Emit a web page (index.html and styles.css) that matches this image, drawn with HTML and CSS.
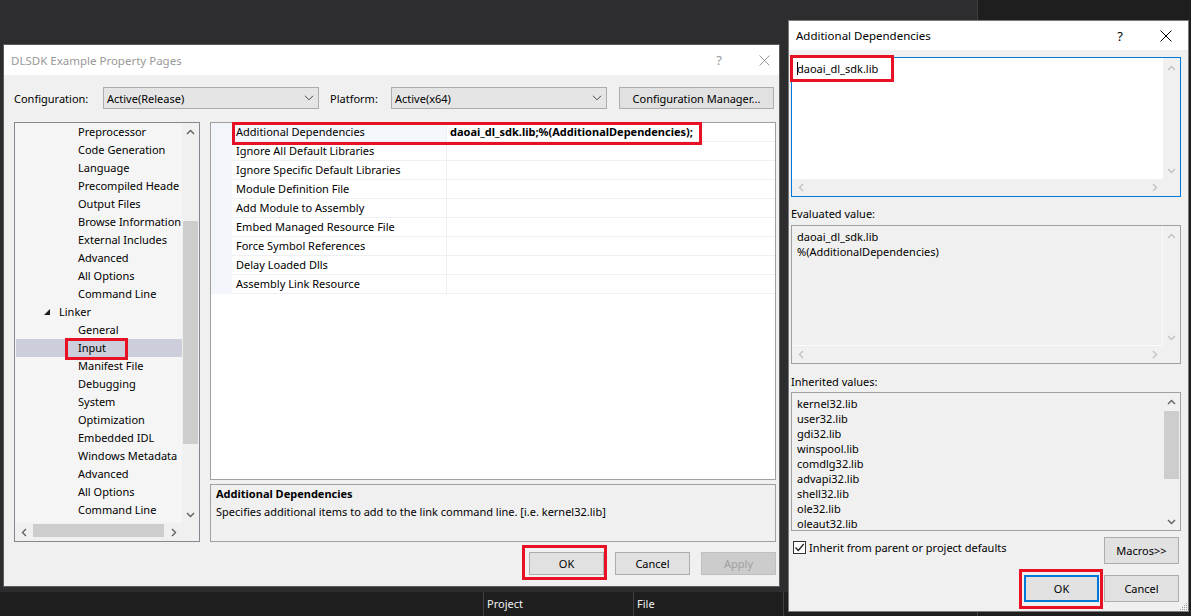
FILE: index.html
```html
<!DOCTYPE html>
<html lang="en">
<head>
  <meta charset="UTF-8">
  <meta name="viewport" content="width=device-width, initial-scale=1.0">
  <title>DLSDK Example Property Pages</title>
  <link rel="stylesheet" href="styles.css">
</head>
<body>
  <div class="ide-side"></div>

  <div class="output-bar">
    <div class="output-head">
      <div class="ocol first"></div>
      <div class="ocol">Project</div>
      <div class="ocol">File</div>
    </div>
  </div>

  <!-- property pages dialog -->
  <div class="window props">
    <div class="titlebar">
      <span class="title">DLSDK Example Property Pages</span>
      <span class="cap-btn help">?</span>
      <span class="cap-btn close">
        <svg width="11" height="11" viewBox="0 0 11 11"><path d="M0.5 0.5L10.5 10.5M10.5 0.5L0.5 10.5" stroke="currentColor" stroke-width="1"/></svg>
      </span>
    </div>
    <div class="props-body">
      <div class="config-row">
        <span class="cfg-label">Configuration:</span>
        <div class="combo">
          <span>Active(Release)</span>
          <svg width="10" height="6" viewBox="0 0 10 6"><path d="M1 0.8L5 4.8L9 0.8" fill="none" stroke="#444" stroke-width="1"/></svg>
        </div>
        <span class="cfg-label platform">Platform:</span>
        <div class="combo">
          <span>Active(x64)</span>
          <svg width="10" height="6" viewBox="0 0 10 6"><path d="M1 0.8L5 4.8L9 0.8" fill="none" stroke="#444" stroke-width="1"/></svg>
        </div>
        <button class="btn cfg-manager">Configuration Manager...</button>
      </div>

      <div class="main">
        <div class="tree">
          <div class="tree-rows">
            <div class="tree-item">Preprocessor</div>
            <div class="tree-item">Code Generation</div>
            <div class="tree-item">Language</div>
            <div class="tree-item">Precompiled Heade</div>
            <div class="tree-item">Output Files</div>
            <div class="tree-item">Browse Information</div>
            <div class="tree-item">External Includes</div>
            <div class="tree-item">Advanced</div>
            <div class="tree-item">All Options</div>
            <div class="tree-item">Command Line</div>
            <div class="tree-item group">
              <svg width="6" height="6" viewBox="0 0 6 6"><path d="M6 0V6H0Z" fill="#1e1e1e"/></svg>
              <span>Linker</span>
            </div>
            <div class="tree-item">General</div>
            <div class="tree-item sel">Input</div>
            <div class="tree-item">Manifest File</div>
            <div class="tree-item">Debugging</div>
            <div class="tree-item">System</div>
            <div class="tree-item">Optimization</div>
            <div class="tree-item">Embedded IDL</div>
            <div class="tree-item">Windows Metadata</div>
            <div class="tree-item">Advanced</div>
            <div class="tree-item">All Options</div>
            <div class="tree-item">Command Line</div>
          </div>
          <div class="vscroll">
            <div class="sb-btn"><svg width="9" height="6" viewBox="0 0 9 6"><path d="M1 5L4.5 1.5L8 5" fill="none" stroke="currentColor" stroke-width="1.4"/></svg></div>
            <div class="track"><div class="thumb tree-vthumb"></div></div>
            <div class="sb-btn"><svg width="9" height="6" viewBox="0 0 9 6"><path d="M1 1L4.5 4.5L8 1" fill="none" stroke="currentColor" stroke-width="1.4"/></svg></div>
          </div>
          <div class="hscroll">
            <div class="sb-btn"><svg width="6" height="9" viewBox="0 0 6 9"><path d="M5 1L1.5 4.5L5 8" fill="none" stroke="currentColor" stroke-width="1.4"/></svg></div>
            <div class="track"><div class="thumb tree-hthumb"></div></div>
            <div class="sb-btn"><svg width="6" height="9" viewBox="0 0 6 9"><path d="M1 1L4.5 4.5L1 8" fill="none" stroke="currentColor" stroke-width="1.4"/></svg></div>
          </div>
          <div class="corner"></div>
        </div>

        <div class="pages">
          <div class="pgrid">
            <div class="prow first">
              <div class="gutter"></div>
              <div class="pname">Additional Dependencies</div>
              <div class="pval">daoai_dl_sdk.lib;%(AdditionalDependencies);</div>
            </div>
            <div class="prow"><div class="gutter"></div><div class="pname">Ignore All Default Libraries</div><div class="pval"></div></div>
            <div class="prow"><div class="gutter"></div><div class="pname">Ignore Specific Default Libraries</div><div class="pval"></div></div>
            <div class="prow"><div class="gutter"></div><div class="pname">Module Definition File</div><div class="pval"></div></div>
            <div class="prow"><div class="gutter"></div><div class="pname">Add Module to Assembly</div><div class="pval"></div></div>
            <div class="prow"><div class="gutter"></div><div class="pname">Embed Managed Resource File</div><div class="pval"></div></div>
            <div class="prow"><div class="gutter"></div><div class="pname">Force Symbol References</div><div class="pval"></div></div>
            <div class="prow"><div class="gutter"></div><div class="pname">Delay Loaded Dlls</div><div class="pval"></div></div>
            <div class="prow"><div class="gutter"></div><div class="pname">Assembly Link Resource</div><div class="pval"></div></div>
            <div class="mark grid-mark"></div>
          </div>
          <div class="desc">
            <div class="desc-title">Additional Dependencies</div>
            <div>Specifies additional items to add to the link command line. [i.e. kernel32.lib]</div>
          </div>
        </div>
      </div>

      <div class="btn-row">
        <span class="marked left-ok"><button class="btn">OK</button></span>
        <button class="btn">Cancel</button>
        <button class="btn" disabled>Apply</button>
      </div>
    </div>
  </div>

  <!-- additional dependencies editor -->
  <div class="window deps">
    <div class="titlebar">
      <span class="title">Additional Dependencies</span>
      <span class="cap-btn help">?</span>
      <span class="cap-btn close">
        <svg width="12" height="12" viewBox="0 0 12 12"><path d="M0.5 0.5L11.5 11.5M11.5 0.5L0.5 11.5" stroke="currentColor" stroke-width="1"/></svg>
      </span>
    </div>
    <div class="deps-body">
      <div class="edit">
        <div class="edit-text"><span class="caret"></span>daoai_dl_sdk.lib</div>
        <div class="vscroll off">
          <div class="sb-btn tallbtn"><svg width="9" height="6" viewBox="0 0 9 6"><path d="M1 5L4.5 1.5L8 5" fill="none" stroke="currentColor" stroke-width="1.4"/></svg></div>
          <div class="track"></div>
          <div class="sb-btn"><svg width="9" height="6" viewBox="0 0 9 6"><path d="M1 1L4.5 4.5L8 1" fill="none" stroke="currentColor" stroke-width="1.4"/></svg></div>
        </div>
        <div class="hscroll off">
          <div class="sb-btn"><svg width="6" height="9" viewBox="0 0 6 9"><path d="M5 1L1.5 4.5L5 8" fill="none" stroke="currentColor" stroke-width="1.4"/></svg></div>
          <div class="track"></div>
          <div class="sb-btn"><svg width="6" height="9" viewBox="0 0 6 9"><path d="M1 1L4.5 4.5L1 8" fill="none" stroke="currentColor" stroke-width="1.4"/></svg></div>
        </div>
        <div class="corner"></div>
        <div class="mark edit-mark"></div>
      </div>

      <div class="field-label first-label">Evaluated value:</div>
      <div class="listbox eval">
        <div class="list-text">daoai_dl_sdk.lib<br>%(AdditionalDependencies)</div>
        <div class="vscroll off">
          <div class="sb-btn tallbtn"><svg width="9" height="6" viewBox="0 0 9 6"><path d="M1 5L4.5 1.5L8 5" fill="none" stroke="currentColor" stroke-width="1.4"/></svg></div>
          <div class="track"></div>
          <div class="sb-btn"><svg width="9" height="6" viewBox="0 0 9 6"><path d="M1 1L4.5 4.5L8 1" fill="none" stroke="currentColor" stroke-width="1.4"/></svg></div>
        </div>
        <div class="hscroll off">
          <div class="sb-btn"><svg width="6" height="9" viewBox="0 0 6 9"><path d="M5 1L1.5 4.5L5 8" fill="none" stroke="currentColor" stroke-width="1.4"/></svg></div>
          <div class="track"></div>
          <div class="sb-btn"><svg width="6" height="9" viewBox="0 0 6 9"><path d="M1 1L4.5 4.5L1 8" fill="none" stroke="currentColor" stroke-width="1.4"/></svg></div>
        </div>
        <div class="corner"></div>
      </div>

      <div class="field-label">Inherited values:</div>
      <div class="listbox inherited">
        <div class="list-text">
          kernel32.lib<br>user32.lib<br>gdi32.lib<br>winspool.lib<br>comdlg32.lib<br>advapi32.lib<br>shell32.lib<br>ole32.lib<br>oleaut32.lib
        </div>
        <div class="vscroll">
          <div class="sb-btn"><svg width="9" height="6" viewBox="0 0 9 6"><path d="M1 5L4.5 1.5L8 5" fill="none" stroke="currentColor" stroke-width="1.4"/></svg></div>
          <div class="track"><div class="thumb inh-thumb"></div></div>
          <div class="sb-btn"><svg width="9" height="6" viewBox="0 0 9 6"><path d="M1 1L4.5 4.5L8 1" fill="none" stroke="currentColor" stroke-width="1.4"/></svg></div>
        </div>
      </div>

      <div class="check-row">
        <label class="check">
          <span class="box"><svg width="11" height="11" viewBox="0 0 11 11"><path d="M1.5 5.5L4.3 8.5L9.7 2" fill="none" stroke="#1a1a1a" stroke-width="1.2"/></svg></span>
          <span class="check-text">Inherit from parent or project defaults</span>
        </label>
        <button class="btn tall">Macros&gt;&gt;</button>
      </div>

      <div class="btn-row deps-btns">
        <span class="marked right-ok"><button class="btn tall default">OK</button></span>
        <button class="btn tall">Cancel</button>
      </div>
    </div>
    <svg class="grip" width="9" height="9" viewBox="0 0 9 9">
      <rect x="7" y="1" width="1" height="1" fill="#999"/>
      <rect x="5" y="3" width="1" height="1" fill="#999"/>
      <rect x="7" y="3" width="1" height="1" fill="#999"/>
      <rect x="3" y="5" width="1" height="1" fill="#999"/>
      <rect x="5" y="5" width="1" height="1" fill="#999"/>
      <rect x="7" y="5" width="1" height="1" fill="#999"/>
      <rect x="1" y="7" width="1" height="1" fill="#999"/>
      <rect x="3" y="7" width="1" height="1" fill="#999"/>
      <rect x="5" y="7" width="1" height="1" fill="#999"/>
      <rect x="7" y="7" width="1" height="1" fill="#999"/>
    </svg>
  </div>
</body>
</html>
```

FILE: styles.css
```css
*,
*::before,
*::after {
  margin: 0;
  padding: 0;
  box-sizing: border-box;
}

body {
  position: relative;
  width: 1191px;
  height: 616px;
  overflow: hidden;
  background: #2d2d30;
  font-family: "Noto Sans", "Open Sans", sans-serif;
  font-size: 11px;
  color: #000;
}

button {
  font: inherit;
  color: inherit;
}

/* dark IDE around the dialogs */
.ide-side {
  position: absolute;
  left: 977px;
  top: 0;
  width: 214px;
  height: 616px;
  background: #1e1e1e;
  border-left: 1px solid #3f3f46;
}

.output-bar {
  position: absolute;
  left: 0;
  top: 587px;
  width: 977px;
  height: 29px;
  padding-top: 5px;
  background: #2d2d30;
}

.output-head {
  display: flex;
  height: 24px;
  background: #1e1e1e;
  color: #f1f1f1;
  line-height: 24px;
}

.ocol {
  width: 150px;
  padding-left: 3px;
  border-right: 1px solid #3f3f46;
}

.ocol.first {
  width: 484px;
}

/* windows */
.window {
  position: absolute;
  display: flex;
  flex-direction: column;
  background: #f0f0f0;
}

.props {
  left: 3px;
  top: 44px;
  width: 777px;
  height: 543px;
  border: 1px solid #5c5c5c;
}

.deps {
  left: 788px;
  top: 20px;
  width: 401px;
  height: 592px;
  border: 1px solid #7a7a7a;
}

.titlebar {
  display: flex;
  align-items: center;
  flex-shrink: 0;
  background: #fff;
}

.props .titlebar {
  height: 30px;
  color: #999;
}

.deps .titlebar {
  height: 29px;
  color: #000;
}

.title {
  flex: 1;
  padding-left: 7px;
  font-size: 11.5px;
}

.cap-btn {
  display: flex;
  justify-content: center;
  width: 30px;
}

.help {
  margin-right: 15px;
  font-size: 13px;
}

.deps .help {
  margin-right: 16px;
}

.deps .close {
  margin-right: 7px;
}

/* property pages body */
.props-body {
  flex: 1;
  display: flex;
  flex-direction: column;
  padding: 12px 3px 0 10px;
}

.config-row {
  display: flex;
  align-items: center;
  height: 22px;
}

.cfg-label {
  width: 89px;
}

.cfg-label.platform {
  width: 61px;
  margin-left: 11px;
}

.combo {
  display: flex;
  align-items: center;
  width: 216px;
  height: 22px;
  padding: 0 4px 0 3px;
  border: 1px solid #adadad;
  background: #e5e5e5;
}

.combo span {
  flex: 1;
}

.btn {
  width: 75px;
  height: 23px;
  border: 1px solid #adadad;
  background: #e1e1e1;
  text-align: center;
}

.btn.cfg-manager {
  width: 155px;
  height: 22px;
  margin-left: 12px;
}

.btn:disabled {
  background: #cccccc;
  border-color: #bfbfbf;
  color: #a0a0a0;
}

.btn.tall {
  height: 27px;
}

.btn.default {
  border: 2px solid #0078d7;
}

.main {
  display: flex;
  gap: 10px;
  margin-top: 13px;
}

/* tree */
.tree {
  display: grid;
  grid-template-columns: 1fr 17px;
  grid-template-rows: 1fr 18px;
  width: 186px;
  height: 420px;
  border: 1px solid #828790;
  background: #f5f5f5;
}

.tree-rows {
  overflow: hidden;
  white-space: nowrap;
}

.tree-item {
  position: relative;
  height: 18px;
  line-height: 18px;
  padding-left: 63px;
}

.tree-item.group {
  display: flex;
  align-items: center;
  padding-left: 29px;
}

.tree-item.group svg {
  margin-right: 9px;
}

.tree-item.sel {
  margin-left: 1px;
  padding-left: 62px;
  background: #cccedb;
}

.tree-item.sel::after {
  content: "";
  position: absolute;
  left: 49px;
  top: -1px;
  width: 63px;
  height: 22px;
  border: 3px solid #e81123;
}

/* scroll bars */
.vscroll {
  display: flex;
  flex-direction: column;
  background: #f0f0f0;
}

.hscroll {
  display: flex;
  background: #f0f0f0;
}

.sb-btn {
  display: flex;
  align-items: center;
  justify-content: center;
  flex-shrink: 0;
  width: 17px;
  height: 17px;
  color: #606060;
}

.hscroll .sb-btn {
  height: auto;
}

.sb-btn.tallbtn {
  height: 20px;
}

.off .sb-btn {
  color: #c2c2c2;
}

.track {
  flex: 1;
}

.thumb {
  background: #cdcdcd;
}

.tree-vthumb {
  width: 15px;
  height: 223px;
  margin: 81px 0 0 1px;
}

.hscroll .track {
  padding: 1px 1px 4px;
}

.tree-hthumb {
  height: 13px;
}

.corner {
  background: #f0f0f0;
}

/* property grid */
.pages {
  display: flex;
  flex-direction: column;
  gap: 4px;
  width: 566px;
}

.pgrid {
  position: relative;
  flex: 1;
  border: 1px solid #a0a0a0;
  background: #fff;
}

.prow {
  display: flex;
  height: 19px;
  line-height: 18px;
}

.gutter {
  width: 21px;
  background: #f2f5fa;
}

.pname {
  width: 215px;
  padding-left: 4px;
  border-right: 1px solid #eef0f3;
  border-bottom: 1px solid #eef0f3;
  white-space: nowrap;
}

.prow.first .pname {
  background: #f4f7fb;
}

.pval {
  flex: 1;
  padding-left: 3px;
  border-bottom: 1px solid #eef0f3;
  font-weight: bold;
  white-space: nowrap;
}

.mark {
  position: absolute;
  border: 3px solid #e81123;
  pointer-events: none;
}

.grid-mark {
  left: 21px;
  top: -1px;
  width: 470px;
  height: 23px;
}

.desc {
  height: 58px;
  padding: 0 5px;
  border: 1px solid #a0a0a0;
  background: #f0f0f0;
  line-height: 18px;
}

.desc-title {
  font-weight: bold;
}

.btn-row {
  display: flex;
  justify-content: flex-end;
  gap: 11px;
  margin-top: 10px;
}

.marked {
  position: relative;
  display: flex;
}

.marked::after {
  content: "";
  position: absolute;
  border: 3px solid #e81123;
}

.left-ok::after {
  left: -7px;
  top: -7px;
  width: 85px;
  height: 35px;
}

/* additional dependencies dialog */
.deps-body {
  flex: 1;
  display: flex;
  flex-direction: column;
  padding: 7px 7px 0 2px;
}

.edit {
  position: relative;
  display: grid;
  grid-template-columns: 1fr 17px;
  grid-template-rows: 1fr 17px;
  height: 140px;
  border: 1px solid #0078d7;
  background: #fff;
}

.edit .vscroll,
.edit .hscroll,
.edit .corner {
  background: #f0f0f0;
}

.edit-text {
  padding: 3px 5px;
  line-height: 15px;
  white-space: nowrap;
}

.caret {
  display: inline-block;
  width: 1px;
  height: 13px;
  margin-right: -1px;
  background: #000;
  vertical-align: -2px;
}

.edit-mark {
  left: -2px;
  top: -3px;
  width: 104px;
  height: 27px;
}

.field-label {
  margin-top: 10px;
  line-height: 15px;
}

.field-label.first-label {
  margin-top: 9px;
}

.listbox {
  display: grid;
  grid-template-columns: 1fr 17px;
  grid-template-rows: 1fr 17px;
  height: 139px;
  margin-top: 3px;
  border: 1px solid #a0a0a0;
  background: #f0f0f0;
}

.listbox.eval {
  margin-top: 4px;
}

.listbox.inherited {
  grid-template-rows: 1fr;
}

.list-text {
  padding: 3px 5px;
  line-height: 15px;
  white-space: nowrap;
  overflow: hidden;
}

.eval .list-text {
  border-right: 1px solid #fafafa;
  border-bottom: 1px solid #fafafa;
}

.inh-thumb {
  width: 15px;
  height: 68px;
  margin: 1px 0 0 1px;
}

.check-row {
  display: flex;
  justify-content: space-between;
  align-items: flex-start;
  margin-top: 6px;
  padding-right: 2px;
}

.check {
  display: flex;
  align-items: center;
  gap: 3px;
  margin: 3px 0 0 2px;
}

.check-text {
  line-height: 15px;
}

.box {
  display: flex;
  align-items: center;
  justify-content: center;
  width: 13px;
  height: 13px;
  border: 1px solid #333;
  background: #fff;
}

.deps-btns {
  gap: 5px;
  margin-top: 11px;
  padding-right: 2px;
}

.right-ok::after {
  left: -5px;
  top: -6px;
  width: 84px;
  height: 40px;
}

.grip {
  position: absolute;
  right: 0;
  bottom: 0;
}
```
